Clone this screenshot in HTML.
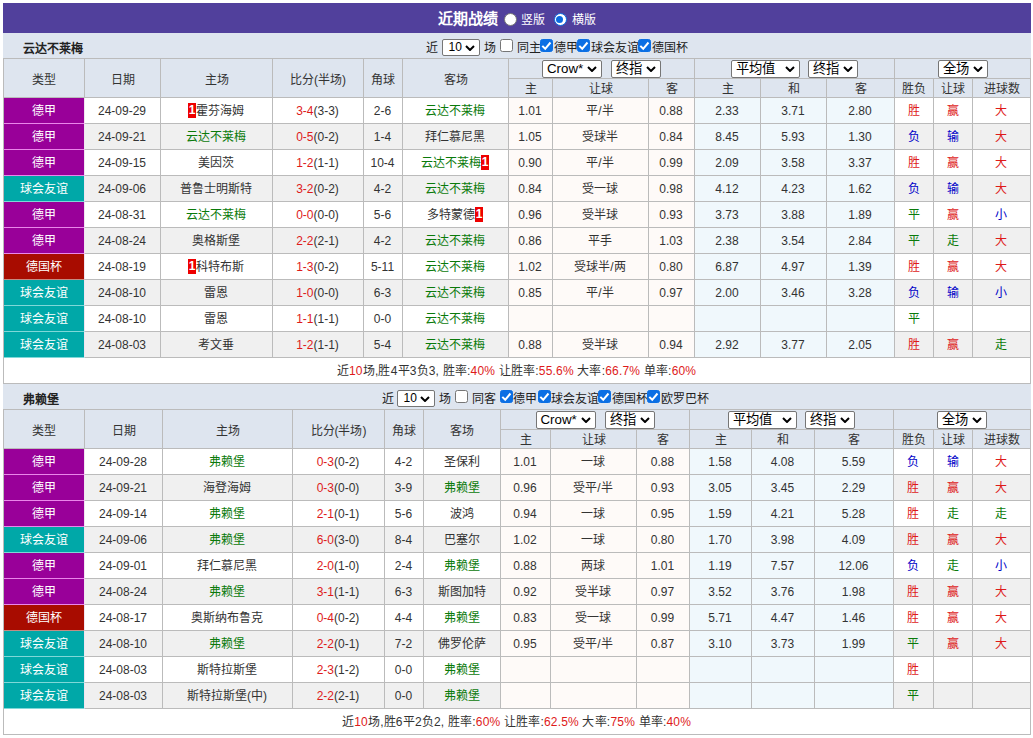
<!DOCTYPE html>
<html lang="zh-CN"><head><meta charset="utf-8"><title>近期战绩</title>
<style>
*{box-sizing:border-box}
html,body{margin:0;padding:0;background:#fff}
body{font-family:"Liberation Sans",sans-serif;font-size:12px;color:#333;width:1033px;height:738px;overflow:hidden;position:relative}
#wrap{position:absolute;left:3px;top:3px;width:1028px}
.title{height:30px;background:#51409c;color:#fff;text-align:center;line-height:30px;font-size:12px;white-space:nowrap;position:relative}
.title .tt{position:absolute;left:435px;top:0;width:60px;font-size:15px;font-weight:bold;line-height:31px;text-align:center}
.title .rl{position:absolute;top:0;line-height:34px;width:24px;text-align:center}
.title .rl:nth-of-type(2){left:518px}
.title .rl:nth-of-type(3){left:568.5px}
.rd{position:absolute;top:10px;width:13px;height:13px;border-radius:50%;background:#fff;border:1px solid #767676}
.rd:nth-of-type(1){left:500.5px}
.rd:nth-of-type(2){left:550.5px}
.rd.on{border:1.5px solid #0b6be0}
.rd.on:after{content:"";position:absolute;left:1.5px;top:1.5px;width:7px;height:7px;border-radius:50%;background:#0b6be0}
.bar{height:25px;background:#dee5ef;position:relative;white-space:nowrap;color:#222}
.bar.b2{height:26px}
table.t tr.h2 th{padding-top:2px}
.tn{position:absolute;left:20px;top:0;line-height:33px;font-weight:bold;color:#222}
.ct{position:absolute;top:0;line-height:30px;text-align:center;overflow:visible;white-space:nowrap}
.cs{position:absolute;top:6px}
.cc{position:absolute;top:6px}
.cb{display:block;width:13px;height:13px;border:1px solid #767676;border-radius:2.5px;background:#fff}
.cb.on{background:#0b6fe4;border-color:#0b6fe4}
.cb svg{display:block;width:13px;height:13px;margin:-1px 0 0 -1px}
.sel{display:inline-block;position:relative;height:18px;border:1px solid #767676;border-radius:2px;background:#fff;vertical-align:top;text-align:left;color:#000;font-size:13.3px;line-height:16px;padding-left:4px;overflow:hidden}
.sel b{font-weight:normal}
.sel svg{position:absolute;right:4px;top:5px;width:10px;height:6px}
.sel.s10{height:17px;line-height:15px;font-size:12px;padding-left:5.5px}
.sel.s10 svg{top:4.5px}
table.t{border-collapse:separate;border-spacing:0;table-layout:fixed;width:1028px;border-left:1px solid #bbb;border-top:1px solid #bbb}
table.t td,table.t th{border-right:1px solid #bbb;border-bottom:1px solid #bbb;text-align:center;padding:0;font-weight:normal;overflow:hidden;white-space:nowrap}
table.t th{background:#dee5ef;color:#333}
tr.h1 th{height:39px}
tr.h1 th.sc3{height:20px}
tr.h2 th{height:19px;line-height:16px;padding-top:2px}
.selwrap{height:19px;padding-top:1px;white-space:nowrap;font-size:0}
table.t td{height:26px;line-height:23px;padding:2px 1px 0 0;background:#fff}
tr.alt td{background:#f0f0f0}
table.t td.as{background:#fefaf8}
table.t td.eu{background:#f0f8fc}
td.lg{color:#fff;border-right-color:#f0e4f0!important}
table.t td.dj{background:#990099;border-bottom-color:#ea86ea}
table.t td.yy{background:#00a8a8;border-bottom-color:#7fd8d8}
table.t td.gb{background:#a80c00;border-bottom-color:#c48c84}
.g{color:#0a7a0a}
.r{color:#de1a1a}
.b{color:#0000c8}
.sc{color:#de1a1a}
.rc{font-style:normal;display:inline-block;background:#e00;color:#fff;font-weight:bold;width:8px;height:15px;line-height:15px;text-align:center;vertical-align:middle;position:relative;top:-1.5px;font-size:12px;letter-spacing:0}
tr.sum td{background:#fff!important;height:26px;letter-spacing:.19px}

</style></head><body>
<div id="wrap">
<div class="title"><span class="tt">近期战绩</span><i class="rd"></i><span class="rl">竖版</span><i class="rd on"></i><span class="rl">横版</span></div>
<div class="bar"><span class="tn">云达不莱梅</span><span class="ct" style="left:423.0px;width:12px">近</span><span class="cs" style="left:439.0px"><span class="sel en s10" style="width:38px"><b>10</b><svg viewBox="0 0 10 6"><path d="M1 1 L5 5 L9 1" fill="none" stroke="#000" stroke-width="2"/></svg></span></span><span class="ct" style="left:480.5px;width:12px">场</span><span class="cc" style="left:497.0px"><i class="cb"></i></span><span class="ct" style="left:514.0px;width:24px">同主</span><span class="cc" style="left:537.0px"><i class="cb on"><svg viewBox="0 0 13 13"><path d="M2.3 6.9 L5.2 9.8 L10.5 3.5" fill="none" stroke="#fff" stroke-width="2"/></svg></i></span><span class="ct" style="left:551.0px;width:24px">德甲</span><span class="cc" style="left:574.0px"><i class="cb on"><svg viewBox="0 0 13 13"><path d="M2.3 6.9 L5.2 9.8 L10.5 3.5" fill="none" stroke="#fff" stroke-width="2"/></svg></i></span><span class="ct" style="left:587.5px;width:48px">球会友谊</span><span class="cc" style="left:635.0px"><i class="cb on"><svg viewBox="0 0 13 13"><path d="M2.3 6.9 L5.2 9.8 L10.5 3.5" fill="none" stroke="#fff" stroke-width="2"/></svg></i></span><span class="ct" style="left:649.0px;width:36px">德国杯</span></div>
<table class="t"><colgroup><col style="width:81px"><col style="width:76px"><col style="width:112px"><col style="width:91px"><col style="width:39px"><col style="width:106px"><col style="width:44px"><col style="width:96px"><col style="width:46px"><col style="width:66px"><col style="width:66px"><col style="width:68px"><col style="width:39px"><col style="width:39px"><col style="width:58px"></colgroup>
<tr class="h1"><th rowspan="2">类型</th><th rowspan="2">日期</th><th rowspan="2">主场</th><th rowspan="2">比分(半场)</th><th rowspan="2">角球</th><th rowspan="2">客场</th><th colspan="3" class="sc3"><div class="selwrap"><span class="sel en" style="width:60px"><b>Crow*</b><svg viewBox="0 0 10 6"><path d="M1 1 L5 5 L9 1" fill="none" stroke="#000" stroke-width="2"/></svg></span><span style="display:inline-block;width:9px"></span><span class="sel " style="width:50px"><b>终指</b><svg viewBox="0 0 10 6"><path d="M1 1 L5 5 L9 1" fill="none" stroke="#000" stroke-width="2"/></svg></span></div></th><th colspan="3" class="sc3"><div class="selwrap"><span class="sel w3" style="width:69px"><b>平均值</b><svg viewBox="0 0 10 6"><path d="M1 1 L5 5 L9 1" fill="none" stroke="#000" stroke-width="2"/></svg></span><span style="display:inline-block;width:8px"></span><span class="sel " style="width:50px"><b>终指</b><svg viewBox="0 0 10 6"><path d="M1 1 L5 5 L9 1" fill="none" stroke="#000" stroke-width="2"/></svg></span></div></th><th colspan="3" class="sc3"><div class="selwrap"><span class="sel " style="width:50px"><b>全场</b><svg viewBox="0 0 10 6"><path d="M1 1 L5 5 L9 1" fill="none" stroke="#000" stroke-width="2"/></svg></span></div></th></tr><tr class="h2"><th>主</th><th>让球</th><th>客</th><th>主</th><th>和</th><th>客</th><th>胜负</th><th>让球</th><th>进球数</th></tr>
<tr class=""><td class="lg dj">德甲</td><td>24-09-29</td><td><i class="rc">1</i>霍芬海姆</td><td><span class="sc">3-4</span>(3-3)</td><td>2-6</td><td><span class="g">云达不莱梅</span></td><td class="as">1.01</td><td class="as">平/半</td><td class="as">0.88</td><td class="eu">2.33</td><td class="eu">3.71</td><td class="eu">2.80</td><td><span class="r">胜</span></td><td><span class="r">赢</span></td><td><span class="r">大</span></td></tr>
<tr class="alt"><td class="lg dj">德甲</td><td>24-09-21</td><td><span class="g">云达不莱梅</span></td><td><span class="sc">0-5</span>(0-2)</td><td>1-4</td><td>拜仁慕尼黑</td><td class="as">1.05</td><td class="as">受球半</td><td class="as">0.84</td><td class="eu">8.45</td><td class="eu">5.93</td><td class="eu">1.30</td><td><span class="b">负</span></td><td><span class="b">输</span></td><td><span class="r">大</span></td></tr>
<tr class=""><td class="lg dj">德甲</td><td>24-09-15</td><td>美因茨</td><td><span class="sc">1-2</span>(1-1)</td><td>10-4</td><td><span class="g">云达不莱梅<i class="rc">1</i></span></td><td class="as">0.90</td><td class="as">平/半</td><td class="as">0.99</td><td class="eu">2.09</td><td class="eu">3.58</td><td class="eu">3.37</td><td><span class="r">胜</span></td><td><span class="r">赢</span></td><td><span class="r">大</span></td></tr>
<tr class="alt"><td class="lg yy">球会友谊</td><td>24-09-06</td><td>普鲁士明斯特</td><td><span class="sc">3-2</span>(0-2)</td><td>4-2</td><td><span class="g">云达不莱梅</span></td><td class="as">0.84</td><td class="as">受一球</td><td class="as">0.98</td><td class="eu">4.12</td><td class="eu">4.23</td><td class="eu">1.62</td><td><span class="b">负</span></td><td><span class="b">输</span></td><td><span class="r">大</span></td></tr>
<tr class=""><td class="lg dj">德甲</td><td>24-08-31</td><td><span class="g">云达不莱梅</span></td><td><span class="sc">0-0</span>(0-0)</td><td>5-6</td><td>多特蒙德<i class="rc">1</i></td><td class="as">0.96</td><td class="as">受半球</td><td class="as">0.93</td><td class="eu">3.73</td><td class="eu">3.88</td><td class="eu">1.89</td><td><span class="g">平</span></td><td><span class="r">赢</span></td><td><span class="b">小</span></td></tr>
<tr class="alt"><td class="lg dj">德甲</td><td>24-08-24</td><td>奥格斯堡</td><td><span class="sc">2-2</span>(2-1)</td><td>4-2</td><td><span class="g">云达不莱梅</span></td><td class="as">0.86</td><td class="as">平手</td><td class="as">1.03</td><td class="eu">2.38</td><td class="eu">3.54</td><td class="eu">2.84</td><td><span class="g">平</span></td><td><span class="g">走</span></td><td><span class="r">大</span></td></tr>
<tr class=""><td class="lg gb">德国杯</td><td>24-08-19</td><td><i class="rc">1</i>科特布斯</td><td><span class="sc">1-3</span>(0-2)</td><td>5-11</td><td><span class="g">云达不莱梅</span></td><td class="as">1.02</td><td class="as">受球半/两</td><td class="as">0.80</td><td class="eu">6.87</td><td class="eu">4.97</td><td class="eu">1.39</td><td><span class="r">胜</span></td><td><span class="r">赢</span></td><td><span class="r">大</span></td></tr>
<tr class="alt"><td class="lg yy">球会友谊</td><td>24-08-10</td><td>雷恩</td><td><span class="sc">1-0</span>(0-0)</td><td>6-3</td><td><span class="g">云达不莱梅</span></td><td class="as">0.85</td><td class="as">平/半</td><td class="as">0.97</td><td class="eu">2.00</td><td class="eu">3.46</td><td class="eu">3.28</td><td><span class="b">负</span></td><td><span class="b">输</span></td><td><span class="b">小</span></td></tr>
<tr class=""><td class="lg yy">球会友谊</td><td>24-08-10</td><td>雷恩</td><td><span class="sc">1-1</span>(1-1)</td><td>0-0</td><td><span class="g">云达不莱梅</span></td><td class="as"></td><td class="as"></td><td class="as"></td><td class="eu"></td><td class="eu"></td><td class="eu"></td><td><span class="g">平</span></td><td></td><td></td></tr>
<tr class="alt"><td class="lg yy">球会友谊</td><td>24-08-03</td><td>考文垂</td><td><span class="sc">1-2</span>(1-1)</td><td>5-4</td><td><span class="g">云达不莱梅</span></td><td class="as">0.88</td><td class="as">受半球</td><td class="as">0.94</td><td class="eu">2.92</td><td class="eu">3.77</td><td class="eu">2.05</td><td><span class="r">胜</span></td><td><span class="r">赢</span></td><td><span class="g">走</span></td></tr>
<tr class="sum"><td colspan="15">近<span class="r">10</span>场,胜4平3负3, 胜率:<span class="r">40%</span> 让胜率:<span class="r">55.6%</span> 大率:<span class="r">66.7%</span> 单率:<span class="r">60%</span></td></tr></table>
<div class="bar"><span class="tn">弗赖堡</span><span class="ct" style="left:378.5px;width:12px">近</span><span class="cs" style="left:394.0px"><span class="sel en s10" style="width:38px"><b>10</b><svg viewBox="0 0 10 6"><path d="M1 1 L5 5 L9 1" fill="none" stroke="#000" stroke-width="2"/></svg></span></span><span class="ct" style="left:435.5px;width:12px">场</span><span class="cc" style="left:452.0px"><i class="cb"></i></span><span class="ct" style="left:469.0px;width:24px">同客</span><span class="cc" style="left:496.5px"><i class="cb on"><svg viewBox="0 0 13 13"><path d="M2.3 6.9 L5.2 9.8 L10.5 3.5" fill="none" stroke="#fff" stroke-width="2"/></svg></i></span><span class="ct" style="left:510.0px;width:24px">德甲</span><span class="cc" style="left:534.5px"><i class="cb on"><svg viewBox="0 0 13 13"><path d="M2.3 6.9 L5.2 9.8 L10.5 3.5" fill="none" stroke="#fff" stroke-width="2"/></svg></i></span><span class="ct" style="left:548.0px;width:48px">球会友谊</span><span class="cc" style="left:595.0px"><i class="cb on"><svg viewBox="0 0 13 13"><path d="M2.3 6.9 L5.2 9.8 L10.5 3.5" fill="none" stroke="#fff" stroke-width="2"/></svg></i></span><span class="ct" style="left:609.0px;width:36px">德国杯</span><span class="cc" style="left:644.0px"><i class="cb on"><svg viewBox="0 0 13 13"><path d="M2.3 6.9 L5.2 9.8 L10.5 3.5" fill="none" stroke="#fff" stroke-width="2"/></svg></i></span><span class="ct" style="left:658.0px;width:48px">欧罗巴杯</span></div>
<table class="t"><colgroup><col style="width:81px"><col style="width:78px"><col style="width:130px"><col style="width:92px"><col style="width:39px"><col style="width:77px"><col style="width:50px"><col style="width:86px"><col style="width:53px"><col style="width:62px"><col style="width:63px"><col style="width:79px"><col style="width:40px"><col style="width:39px"><col style="width:58px"></colgroup>
<tr class="h1"><th rowspan="2">类型</th><th rowspan="2">日期</th><th rowspan="2">主场</th><th rowspan="2">比分(半场)</th><th rowspan="2">角球</th><th rowspan="2">客场</th><th colspan="3" class="sc3"><div class="selwrap"><span class="sel en" style="width:60px"><b>Crow*</b><svg viewBox="0 0 10 6"><path d="M1 1 L5 5 L9 1" fill="none" stroke="#000" stroke-width="2"/></svg></span><span style="display:inline-block;width:9px"></span><span class="sel " style="width:50px"><b>终指</b><svg viewBox="0 0 10 6"><path d="M1 1 L5 5 L9 1" fill="none" stroke="#000" stroke-width="2"/></svg></span></div></th><th colspan="3" class="sc3"><div class="selwrap"><span class="sel w3" style="width:69px"><b>平均值</b><svg viewBox="0 0 10 6"><path d="M1 1 L5 5 L9 1" fill="none" stroke="#000" stroke-width="2"/></svg></span><span style="display:inline-block;width:8px"></span><span class="sel " style="width:50px"><b>终指</b><svg viewBox="0 0 10 6"><path d="M1 1 L5 5 L9 1" fill="none" stroke="#000" stroke-width="2"/></svg></span></div></th><th colspan="3" class="sc3"><div class="selwrap"><span class="sel " style="width:50px"><b>全场</b><svg viewBox="0 0 10 6"><path d="M1 1 L5 5 L9 1" fill="none" stroke="#000" stroke-width="2"/></svg></span></div></th></tr><tr class="h2"><th>主</th><th>让球</th><th>客</th><th>主</th><th>和</th><th>客</th><th>胜负</th><th>让球</th><th>进球数</th></tr>
<tr class=""><td class="lg dj">德甲</td><td>24-09-28</td><td><span class="g">弗赖堡</span></td><td><span class="sc">0-3</span>(0-2)</td><td>4-2</td><td>圣保利</td><td class="as">1.01</td><td class="as">一球</td><td class="as">0.88</td><td class="eu">1.58</td><td class="eu">4.08</td><td class="eu">5.59</td><td><span class="b">负</span></td><td><span class="b">输</span></td><td><span class="r">大</span></td></tr>
<tr class="alt"><td class="lg dj">德甲</td><td>24-09-21</td><td>海登海姆</td><td><span class="sc">0-3</span>(0-0)</td><td>3-9</td><td><span class="g">弗赖堡</span></td><td class="as">0.96</td><td class="as">受平/半</td><td class="as">0.93</td><td class="eu">3.05</td><td class="eu">3.45</td><td class="eu">2.29</td><td><span class="r">胜</span></td><td><span class="r">赢</span></td><td><span class="r">大</span></td></tr>
<tr class=""><td class="lg dj">德甲</td><td>24-09-14</td><td><span class="g">弗赖堡</span></td><td><span class="sc">2-1</span>(0-1)</td><td>5-6</td><td>波鸿</td><td class="as">0.94</td><td class="as">一球</td><td class="as">0.95</td><td class="eu">1.59</td><td class="eu">4.21</td><td class="eu">5.28</td><td><span class="r">胜</span></td><td><span class="g">走</span></td><td><span class="g">走</span></td></tr>
<tr class="alt"><td class="lg yy">球会友谊</td><td>24-09-06</td><td><span class="g">弗赖堡</span></td><td><span class="sc">6-0</span>(3-0)</td><td>8-4</td><td>巴塞尔</td><td class="as">1.02</td><td class="as">一球</td><td class="as">0.80</td><td class="eu">1.70</td><td class="eu">3.98</td><td class="eu">4.09</td><td><span class="r">胜</span></td><td><span class="r">赢</span></td><td><span class="r">大</span></td></tr>
<tr class=""><td class="lg dj">德甲</td><td>24-09-01</td><td>拜仁慕尼黑</td><td><span class="sc">2-0</span>(1-0)</td><td>2-4</td><td><span class="g">弗赖堡</span></td><td class="as">0.88</td><td class="as">两球</td><td class="as">1.01</td><td class="eu">1.19</td><td class="eu">7.57</td><td class="eu">12.06</td><td><span class="b">负</span></td><td><span class="g">走</span></td><td><span class="b">小</span></td></tr>
<tr class="alt"><td class="lg dj">德甲</td><td>24-08-24</td><td><span class="g">弗赖堡</span></td><td><span class="sc">3-1</span>(1-1)</td><td>6-3</td><td>斯图加特</td><td class="as">0.92</td><td class="as">受半球</td><td class="as">0.97</td><td class="eu">3.52</td><td class="eu">3.76</td><td class="eu">1.98</td><td><span class="r">胜</span></td><td><span class="r">赢</span></td><td><span class="r">大</span></td></tr>
<tr class=""><td class="lg gb">德国杯</td><td>24-08-17</td><td>奥斯纳布鲁克</td><td><span class="sc">0-4</span>(0-2)</td><td>4-4</td><td><span class="g">弗赖堡</span></td><td class="as">0.83</td><td class="as">受一球</td><td class="as">0.99</td><td class="eu">5.71</td><td class="eu">4.47</td><td class="eu">1.46</td><td><span class="r">胜</span></td><td><span class="r">赢</span></td><td><span class="r">大</span></td></tr>
<tr class="alt"><td class="lg yy">球会友谊</td><td>24-08-10</td><td><span class="g">弗赖堡</span></td><td><span class="sc">2-2</span>(0-1)</td><td>7-2</td><td>佛罗伦萨</td><td class="as">0.95</td><td class="as">受平/半</td><td class="as">0.87</td><td class="eu">3.10</td><td class="eu">3.73</td><td class="eu">1.99</td><td><span class="g">平</span></td><td><span class="r">赢</span></td><td><span class="r">大</span></td></tr>
<tr class=""><td class="lg yy">球会友谊</td><td>24-08-03</td><td>斯特拉斯堡</td><td><span class="sc">2-3</span>(1-2)</td><td>0-0</td><td><span class="g">弗赖堡</span></td><td class="as"></td><td class="as"></td><td class="as"></td><td class="eu"></td><td class="eu"></td><td class="eu"></td><td><span class="r">胜</span></td><td></td><td></td></tr>
<tr class="alt"><td class="lg yy">球会友谊</td><td>24-08-03</td><td>斯特拉斯堡(中)</td><td><span class="sc">2-2</span>(2-1)</td><td>0-0</td><td><span class="g">弗赖堡</span></td><td class="as"></td><td class="as"></td><td class="as"></td><td class="eu"></td><td class="eu"></td><td class="eu"></td><td><span class="g">平</span></td><td></td><td></td></tr>
<tr class="sum"><td colspan="15">近<span class="r">10</span>场,胜6平2负2, 胜率:<span class="r">60%</span> 让胜率:<span class="r">62.5%</span> 大率:<span class="r">75%</span> 单率:<span class="r">40%</span></td></tr></table>
</div>
</body></html>
